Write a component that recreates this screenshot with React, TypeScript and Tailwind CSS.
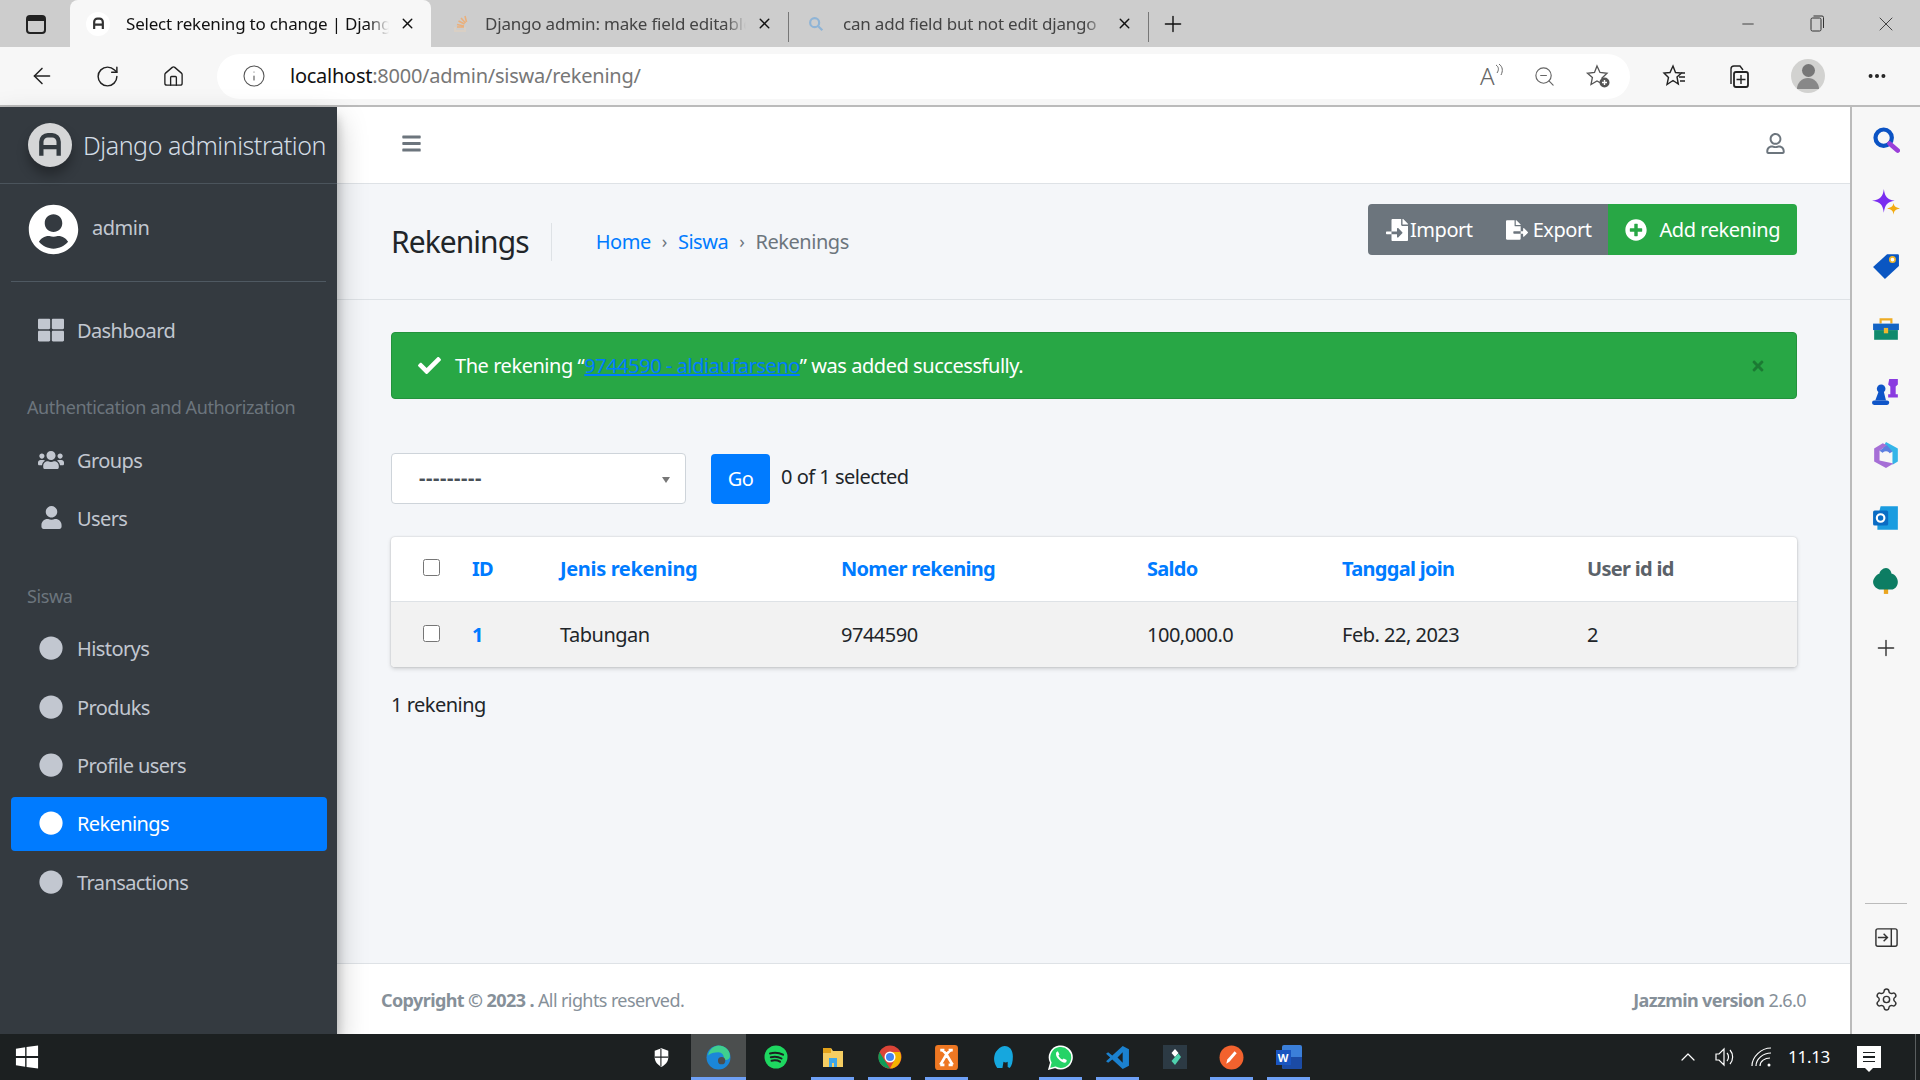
import React from "react";
import {
  FaBars,
  FaCheck,
  FaCircle,
  FaFileExport,
  FaFileImport,
  FaPlusCircle,
  FaRegUser,
  FaThLarge,
  FaTimes,
  FaUser,
  FaUserCircle,
  FaUsers,
} from "react-icons/fa";
import { ArrowLeft, ChevronUp, Home, Info, Minus, MoreHorizontal, Plus, RotateCw, Settings, X, ZoomOut } from "lucide-react";

const sans = "[font-family:'Noto_Sans','Open_Sans',sans-serif]";

function DjangoMark({ className = "" }: { className?: string }) {
  return (
    <svg viewBox="0 0 24 24" className={className} fill="none" stroke="currentColor" strokeWidth="4">
      <path d="M4 22V9a6 6 0 0 1 6-6h4a6 6 0 0 1 6 6v13M4 14h16" />
    </svg>
  );
}

function Tab({
  title,
  icon,
  active,
  width,
}: {
  title: string;
  icon: React.ReactNode;
  active?: boolean;
  width: string;
}) {
  return (
    <div
      className={`flex h-full items-center ${width} ${
        active ? "rounded-t-lg bg-[#f7f7f7] text-[#111]" : "text-[#444]"
      }`}
    >
      <div className={`flex shrink-0 justify-center ${active ? "w-[56px]" : "w-[54px]"}`}>{icon}</div>
      <div className="min-w-0 flex-1 overflow-hidden whitespace-nowrap text-[17px] tracking-[-0.2px] [mask-image:linear-gradient(to_right,black_92%,transparent)]">
        {title}
      </div>
      <X size={17} className="ml-[10px] mr-[15px] shrink-0 text-[#111]" strokeWidth={2} />
    </div>
  );
}

function BrowserChrome() {
  return (
    <div className="shrink-0">
      <div className="flex h-[47px] items-end bg-[#cdcdcd] pl-[70px]">
        <div className="absolute left-[26px] top-[15px] h-[19px] w-[20px] rounded-[4px] border-2 border-[#222] bg-[#cdcdcd]">
          <div className="h-[4px] bg-[#222]" />
        </div>
        <Tab
          active
          width="w-[361px]"
          title="Select rekening to change | Django"
          icon={
            <div className="flex h-[24px] w-[24px] items-center justify-center rounded-full bg-white text-[#333]">
              <DjangoMark className="h-[13px] w-[13px]" />
            </div>
          }
        />
        <Tab
          width="w-[357px]"
          title="Django admin: make field editable"
          icon={
            <svg viewBox="0 0 20 20" className="h-[20px] w-[20px] translate-x-[3px]" fill="none">
              <path d="M4 13v4h10v-4" stroke="#d9cfc4" strokeWidth="2" />
              <path d="M6 13h7M6 10.500l7 1.500M7.500 7l6 3M10 4l4.500 5M14 2l1.500 6" stroke="#eab07c" strokeWidth="1.600" />
            </svg>
          }
        />
        <div className="mb-[5px] h-[30px] w-px self-end bg-[#777]" />
        <Tab
          width="w-[359px]"
          title="can add field but not edit django"
          icon={
            <svg viewBox="0 0 20 20" className="h-[18px] w-[18px]" fill="none" stroke="#8fb4d6" strokeWidth="2.400">
              <circle cx="8.500" cy="8.500" r="5" />
              <path d="M12.500 12.500L17 17" />
            </svg>
          }
        />
        <div className="mb-[5px] h-[30px] w-px self-end bg-[#777]" />
        <div className="flex h-full w-[48px] items-center justify-center">
          <Plus size={26} strokeWidth={1.300} className="text-[#111]" />
        </div>
        <div className="ml-auto flex h-full items-center text-[#333]">
          <div className="flex w-[69px] justify-center"><Minus size={18} strokeWidth={1.200} /></div>
          <div className="flex w-[69px] justify-center">
            <svg viewBox="0 0 14 17" className="h-[17px] w-[14px]" fill="none" stroke="currentColor" strokeWidth="1">
              <rect x="1" y="3" width="10" height="13" rx="1.500" />
              <path d="M3.500 1H12a1.500 1.500 0 0 1 1.500 1.500V13" />
            </svg>
          </div>
          <div className="flex w-[69px] justify-center"><X size={24} strokeWidth={0.900} /></div>
        </div>
      </div>
      <div className="flex h-[60px] items-center border-b-2 border-b-[#bbb] bg-[#f7f7f7] text-[#222]">
        <div className="flex w-[217px] shrink-0 items-center pl-[29px]">
          <ArrowLeft size={26} strokeWidth={1.400} />
          <RotateCw size={25} strokeWidth={1.400} className="ml-[40px]" />
          <Home size={23} strokeWidth={1.400} className="ml-[42px]" />
        </div>
        <div className="flex h-[45px] w-[1413px] items-center rounded-full bg-white pl-[25px] pr-[19px]">
          <Info size={24} strokeWidth={1.100} className="text-[#555]" />
          <div className="ml-[24px] text-[20px] tracking-[-0.25px] text-[#777]">
            <span className="text-[#111]">localhost</span>:8000/admin/siswa/rekening/
          </div>
          <div className="ml-auto flex items-center text-[#666]">
            <div className="flex w-[30px] items-start">
              <span className="text-[24px] font-light leading-none">A</span>
              <svg viewBox="0 0 10 14" className="h-[14px] w-[10px]" fill="none" stroke="currentColor" strokeWidth="1">
                <path d="M1 1c3 2 3 5 1 8M4 0c4 3 4 7 2 11" />
              </svg>
            </div>
            <ZoomOut size={23} strokeWidth={1.200} className="ml-[23px]" />
            <svg viewBox="0 0 26 26" className="ml-[29px] h-[26px] w-[26px]" fill="none" stroke="#555" strokeWidth="1.300">
              <path d="M12 3l3 6.500 7 .8-5 4.600 1.400 6.600L12 18l-6 3.500 1.400-7L2.500 10.300l7-.8z" />
              <circle cx="19.500" cy="19.500" r="5" fill="#555" stroke="none" />
              <path d="M19.500 17v5M17 19.500h5" stroke="#fff" strokeWidth="1.400" />
            </svg>
          </div>
        </div>
        <div className="ml-[32px] flex items-center text-[#222]">
          <svg viewBox="0 0 26 26" className="h-[26px] w-[26px]" fill="none" stroke="currentColor" strokeWidth="1.400">
            <path d="M11 3l2.500 6.500 6 .5-4.500 4 1.300 7L11 17.500 5 21.500l1.500-7L2 10l6-.5zM17 14h6M18 18h5M19 10h4" />
          </svg>
          <svg viewBox="0 0 26 26" className="ml-[37px] h-[26px] w-[26px]" fill="none" stroke="currentColor" strokeWidth="1.400">
            <path d="M6 21V6a3 3 0 0 1 3-3h6l3 4" />
            <rect x="9" y="9" width="14" height="15" rx="2" strokeWidth="1.800" />
            <path d="M16 12v9M11.500 16.500h9" />
          </svg>
          <div className="ml-[40px] flex h-[34px] w-[34px] flex-col items-center justify-center overflow-hidden rounded-full bg-[#d2d2d0]">
            <div className="h-[13px] w-[13px] rounded-full bg-[#777]" />
            <div className="mt-[1px] h-[11px] w-[22px] rounded-t-full bg-[#888]" />
          </div>
          <MoreHorizontal size={22} strokeWidth={2.400} className="ml-[41px]" />
        </div>
      </div>
    </div>
  );
}

function NavItem({ label, icon, active }: { label: string; icon: React.ReactNode; active?: boolean }) {
  return (
    <div
      className={`flex h-[54px] items-center rounded-[4px] pl-[27px] text-[20px] tracking-[-0.6px] ${
        active ? "bg-[#007bff] text-white" : "text-[#c2c7d0]"
      }`}
    >
      <div className="-mt-[2px] flex w-[26px] justify-center">{icon}</div>
      <span className="ml-[13px]">{label}</span>
    </div>
  );
}

function NavHeader({ label, height }: { label: string; height: string }) {
  return (
    <div className={`flex items-end pb-[8px] pl-[16px] text-[18px] tracking-[-0.4px] text-[#6c757d] ${height}`}>{label}</div>
  );
}

function Sidebar() {
  const dot = <FaCircle size={24} />;
  return (
    <aside className="relative z-10 flex w-[337px] shrink-0 flex-col bg-[#343a40] shadow-[0_14px_28px_rgba(0,0,0,0.25),0_10px_10px_rgba(0,0,0,0.22)]">
      <div className="flex h-[77px] shrink-0 items-center border-b border-[#4b545c] pl-[28px]">
        <div className="flex h-[44px] w-[44px] items-center justify-center rounded-full bg-[#d5d6d7] text-[#333a40] shadow-[0_8px_12px_rgba(0,0,0,0.3)]">
          <DjangoMark className="h-[26px] w-[26px]" />
        </div>
        <span className="ml-[11px] mt-[2px] text-[25px] font-light tracking-[-0.45px] text-[#d3dde6]">Django administration</span>
      </div>
      <div className="mx-[11px] flex h-[98px] shrink-0 items-center border-b border-[#4f5962] pb-[6px] pl-[17px]">
        <FaUserCircle size={51} className="text-white" />
        <span className="-mt-[4px] ml-[13px] text-[20px] tracking-[-0.5px] text-[#c2c7d0]">admin</span>
      </div>
      <div className="flex flex-col gap-[4.3px] pl-[11px] pr-[10px] pt-[22px]">
        <NavItem label="Dashboard" icon={<FaThLarge size={26} />} />
        <NavHeader label="Authentication and Authorization" height="h-[67px]" />
        <NavItem label="Groups" icon={<FaUsers size={30} />} />
        <NavItem label="Users" icon={<FaUser size={23} />} />
        <NavHeader label="Siswa" height="h-[68px]" />
        <NavItem label="Historys" icon={dot} />
        <NavItem label="Produks" icon={dot} />
        <NavItem label="Profile users" icon={dot} />
        <NavItem label="Rekenings" icon={dot} active />
        <NavItem label="Transactions" icon={dot} />
      </div>
    </aside>
  );
}

function ContentHeader() {
  return (
    <div className="flex h-[116px] shrink-0 items-center border-b border-[#dee2e6] pl-[54px] pr-[53px] tracking-[-0.45px]">
      <h1 className="text-[30px] tracking-[-0.95px] text-[#212529]">Rekenings</h1>
      <div className="ml-[22px] h-[38px] w-px bg-[#dee2e6]" />
      <nav className="ml-[44px] flex items-center text-[20px] text-[#6c757d]">
        <span className="text-[#007bff]">Home</span>
        <span className="mx-[11px] text-[18px]">›</span>
        <span className="text-[#007bff]">Siswa</span>
        <span className="mx-[11px] text-[18px]">›</span>
        <span>Rekenings</span>
      </nav>
      <div className="-mt-[24px] ml-auto flex h-[51px] overflow-hidden rounded-[4px] text-[20px] text-white">
        <div className="flex items-center bg-[#6c757d] pl-[18px] pr-[16px]">
          <FaFileImport size={22} />
          <span className="ml-[2px]">Import</span>
          <FaFileExport size={22} className="ml-[33px]" />
          <span className="ml-[5px]">Export</span>
        </div>
        <div className="flex items-center bg-[#28a745] px-[17px]">
          <FaPlusCircle size={22} />
          <span className="ml-[13px]">Add rekening</span>
        </div>
      </div>
    </div>
  );
}

const cols = "grid grid-cols-[81px_88px_281px_306px_195px_245px_1fr] items-center";

function Results() {
  return (
    <div className="mt-[33px] rounded-[4px] bg-white text-[20px] tracking-[-0.5px] text-[#212529] shadow-[0_0_2px_rgba(0,0,0,0.2),0_2px_4px_rgba(0,0,0,0.15)]">
      <div className={`${cols} h-[65px] border-b border-[#dee2e6] font-bold tracking-[-0.7px]`}>
        <div className="-mt-[3px] flex justify-center"><input type="checkbox" className="h-[17px] w-[17px]" readOnly /></div>
        <span className="text-[#007bff]">ID</span>
        <span className="tracking-[-0.35px] text-[#007bff]">Jenis rekening</span>
        <span className="text-[#007bff]">Nomer rekening</span>
        <span className="text-[#007bff]">Saldo</span>
        <span className="text-[#007bff]">Tanggal join</span>
        <span className="text-[#5b6269]">User id id</span>
      </div>
      <div className={`${cols} h-[65px] rounded-b-[4px] bg-[#f2f2f2]`}>
        <div className="-mt-[3px] flex justify-center"><input type="checkbox" className="h-[17px] w-[17px]" readOnly /></div>
        <span className="font-bold text-[#007bff]">1</span>
        <span>Tabungan</span>
        <span>9744590</span>
        <span>100,000.0</span>
        <span>Feb. 22, 2023</span>
        <span>2</span>
      </div>
    </div>
  );
}

function Main() {
  return (
    <main className="flex min-w-0 flex-1 flex-col bg-[#f4f6f9]">
      <div className="flex h-[77px] shrink-0 items-center justify-between border-b border-[#dee2e6] bg-white px-[64px] pb-[4px]">
        <FaBars size={21} className="text-[#6c757d]" />
        <FaRegUser size={21} className="text-[#6c757d]" />
      </div>
      <ContentHeader />
      <div className="flex-1 pl-[54px] pr-[53px] pt-[32px]">
        <div className="flex h-[67px] items-center rounded-[4px] border border-[#23923d] bg-[#28a745] pl-[26px] pr-[30px] text-[20px] tracking-[-0.45px] text-white">
          <FaCheck size={23} />
          <span className="ml-[14px]">
            The rekening “<span className="text-[#007bff] underline">9744590 - aldiaufarseno</span>” was added successfully.
          </span>
          <FaTimes size={16} className="ml-auto text-[#1b7a33]" />
        </div>
        <div className="mt-[54px] flex h-[51px] items-center text-[20px] tracking-[-0.5px] text-[#212529]">
          <div className="relative flex h-[51px] w-[295px] items-center rounded-[4px] border border-[#ced4da] bg-white pb-[2px] pl-[27px] text-[20px] font-bold tracking-[0.6px] text-[#495057]">
            ---------
            <div className="absolute right-[15px] top-[23px] h-0 w-0 border-x-[4px] border-t-[6px] border-x-transparent border-t-[#777]" />
          </div>
          <div className="ml-[25px] flex h-[50px] w-[59px] items-center justify-center rounded-[4px] bg-[#007bff] text-white">Go</div>
          <span className="-mt-[4px] ml-[11px]">0 of 1 selected</span>
        </div>
        <Results />
        <div className="mt-[23px] text-[20px] tracking-[-0.5px] text-[#212529]">1 rekening</div>
      </div>
      <div className="flex h-[71px] shrink-0 items-center justify-between border-t border-[#dee2e6] bg-white px-[44px] pt-[2px] text-[18px] tracking-[-0.6px] text-[#869099]">
        <div><span className="font-bold">Copyright © 2023 .</span> All rights reserved.</div>
        <div><span className="font-bold">Jazzmin version</span> 2.6.0</div>
      </div>
    </main>
  );
}

function EdgeRail() {
  return (
    <aside className="flex w-[70px] shrink-0 flex-col items-center border-l-2 border-l-[#bbb] bg-[#f7f7f7]">
      <div className="flex flex-col items-center gap-[35px] pt-[19px]">
        <svg viewBox="0 0 24 24" className="h-[28px] w-[28px]" fill="none">
          <circle cx="10" cy="10" r="7" stroke="#0b53c4" strokeWidth="3.600" />
          <path d="M15 15l7 6" stroke="#9a3fd8" strokeWidth="4" strokeLinecap="round" />
        </svg>
        <svg viewBox="0 0 26 26" className="h-[28px] w-[28px]">
          <path d="M11 0c1 7 3 10 10 11-7 1-9 4-10 11-1-7-3-10-11-11 8-1 10-4 11-11z" fill="#7a2cf0" />
          <path d="M20 13c.5 3 1.500 4 6 5-4.500 1-5.500 2-6 6-.5-4-1.500-5-6-6 4.500-1 5.500-2 6-5z" fill="#f3ab12" />
        </svg>
        <svg viewBox="0 0 26 26" className="h-[28px] w-[28px]">
          <path d="M1 14L14 2h10a1 1 0 0 1 1 1v10L12 25z" fill="#0a56c2" />
          <circle cx="19" cy="7" r="2.500" fill="#fff" stroke="#f0b429" strokeWidth="1.500" />
        </svg>
        <svg viewBox="0 0 26 26" className="h-[28px] w-[28px]">
          <path d="M8 8V4h10v4" fill="none" stroke="#eeac24" strokeWidth="2" />
          <rect x="1" y="8" width="24" height="6" fill="#1364c4" />
          <rect x="2" y="14" width="22" height="9" fill="#0f8a6d" />
          <rect x="11" y="12" width="4" height="5" fill="#f1b82d" />
        </svg>
        <svg viewBox="0 0 26 26" className="h-[28px] w-[28px]">
          <path d="M16 1h8v5l-2 2v7h2v3h-9v-3h2V8l-2-2z" fill="#8a3be0" />
          <circle cx="8.500" cy="10" r="4" fill="#0f55c8" />
          <path d="M6 13h5l2 8H3z" fill="#0f55c8" />
          <rect x="0" y="21" width="16" height="4" rx="2" fill="#0f55c8" />
        </svg>
        <svg viewBox="0 0 26 26" className="h-[28px] w-[28px]">
          <path d="M13 1l11 6v12l-5 3V10l-9-4z" fill="#34b5e8" />
          <path d="M2 7l8-5 4 2-7 5v9l13 3-7 4-11-6z" fill="#a66fd6" />
          <path d="M7 9l7-5 5 6-6 3z" fill="#5c7fe0" />
          <circle cx="13" cy="13" r="3.500" fill="#f7f7f7" />
        </svg>
        <svg viewBox="0 0 26 26" className="h-[28px] w-[28px]">
          <path d="M8 2h16v22H5V14z" fill="#1a9ce0" />
          <rect x="1" y="6" width="14" height="14" rx="1.500" fill="#0a6cc4" />
          <circle cx="8" cy="13" r="3.500" fill="none" stroke="#fff" strokeWidth="2" />
        </svg>
        <svg viewBox="0 0 26 26" className="h-[28px] w-[28px]">
          <rect x="11" y="20" width="4" height="5" fill="#eaa51f" />
          <path d="M13 1c3 0 5 3 5 5 4 1 6 5 6 8 0 4-3 7-6 7H8c-3 0-7-3-7-7 0-3 3-7 6-8 0-2 3-5 6-5z" fill="#0d7d63" />
        </svg>
        <Plus size={26} strokeWidth={1.300} className="mt-[5px] text-[#333]" />
      </div>
      <div className="mt-auto flex w-full flex-col items-center pb-[22px] text-[#333]">
        <div className="mb-[21px] h-px w-[42px] bg-[#bbb]" />
        <svg viewBox="0 0 26 26" className="h-[25px] w-[25px]" fill="none" stroke="currentColor" strokeWidth="1.500">
          <rect x="2" y="4" width="22" height="18" rx="2" />
          <path d="M18 4v18M4 13h10M10 9l4 4-4 4" />
        </svg>
        <Settings size={25} strokeWidth={1.400} className="mt-[37px]" />
      </div>
    </aside>
  );
}

function TaskIcon({ children, running, hot }: { children: React.ReactNode; running?: boolean; hot?: boolean }) {
  return (
    <div className={`relative flex h-full items-center justify-center ${hot ? "mx-[1px] w-[55px] bg-[#4b4e4e]" : "w-[57px]"}`}>
      {children}
      {running && (
        <div className={`absolute bottom-0 h-[3px] bg-[#6ea0f5] ${hot ? "w-full" : "w-[43px]"}`} />
      )}
    </div>
  );
}

function Taskbar() {
  return (
    <div className="relative z-20 flex h-[46px] shrink-0 items-center bg-[#1c2021] text-white">
      <svg viewBox="0 0 26 26" className="ml-[15px] h-[24px] w-[24px]" fill="#fff">
        <path d="M1 4l10-1.500V12H1zM12.500 2.300L25 .5V12H12.500zM1 14h10v9.500L1 22zM12.500 14H25v11.500l-12.500-1.800z" />
      </svg>
      <div className="ml-[594px] flex h-full items-center">
        <TaskIcon>
          <svg viewBox="0 0 20 24" className="h-[21px] w-[17px]" fill="#fff"><path d="M10 1l8 3v8c0 5-4 9-8 11-4-2-8-6-8-11V4z" /><path d="M9.300 2v20M2 11.500h16" stroke="#1c2021" strokeWidth="1.300" /></svg>
        </TaskIcon>
        <TaskIcon hot running>
          <svg viewBox="0 0 24 24" className="h-[25px] w-[25px]">
            <circle cx="12" cy="12" r="11.500" fill="#1b87d8" />
            <path d="M2 10C3 4 8 .5 12 .5c6 0 11 4.500 11 10 0 3-3 4.500-6 3.500 1-4-2-7-5-7-4 0-8 1-10 3z" fill="#3fcf8e" />
            <circle cx="15" cy="15" r="3.500" fill="#4b4e4e" />
          </svg>
        </TaskIcon>
        <TaskIcon>
          <svg viewBox="0 0 24 24" className="h-[24px] w-[24px]">
            <circle cx="12" cy="12" r="11.500" fill="#1ed760" />
            <path d="M6 8.500c4-1 9-.8 13 1.200M6.800 12.300c3.500-.8 7.500-.6 10.700 1.200M7.500 15.700c3-.6 6-.5 8.500 1" stroke="#1c2021" strokeWidth="2" fill="none" strokeLinecap="round" />
          </svg>
        </TaskIcon>
        <TaskIcon running>
          <svg viewBox="0 0 24 24" className="h-[24px] w-[24px]">
            <path d="M2 3h8l2 3h10v16H2z" fill="#f5cd62" />
            <path d="M2 3h8v5H2z" fill="#e3a21a" />
            <path d="M8 22v-9h8v9h-3v-4h-2v4z" fill="#3ea6e8" />
          </svg>
        </TaskIcon>
        <TaskIcon running>
          <svg viewBox="0 0 24 24" className="h-[24px] w-[24px]">
            <circle cx="12" cy="12" r="11.500" fill="#db4437" />
            <path d="M12 23.500A11.500 11.500 0 0 1 1.500 7L7 16z" fill="#0f9d58" />
            <path d="M12 23.500A11.500 11.500 0 0 0 22 7H12l4 9z" fill="#f4b400" />
            <circle cx="12" cy="12" r="5.500" fill="#fff" />
            <circle cx="12" cy="12" r="4" fill="#4285f4" />
          </svg>
        </TaskIcon>
        <TaskIcon running>
          <svg viewBox="0 0 24 24" className="h-[25px] w-[25px]">
            <rect x="1" y="0" width="22" height="24" rx="3" fill="#ee7722" />
            <path d="M7 5c4 0 8 10 11 14M17 5C13 5 9 15 6 19M6 5h4M14 5h4M6 19h4M14 19h4" stroke="#fff" strokeWidth="2.600" fill="none" />
          </svg>
        </TaskIcon>
        <TaskIcon>
          <svg viewBox="0 0 24 24" className="h-[25px] w-[25px]">
            <path d="M6 22c-3-4-4-9-2-14 2-4 6-7 9-7 5 0 8 4 8 10 0 5-1 9-3 11l-2-1v-5c-1 1-3 1-4 0l-1 6z" fill="#16a7de" />
          </svg>
        </TaskIcon>
        <TaskIcon running>
          <svg viewBox="0 0 24 24" className="h-[25px] w-[25px]">
            <path d="M1 23l1.700-6A10.800 10.800 0 1 1 7 21.400z" fill="#25d366" stroke="#fff" strokeWidth="1.500" />
            <path d="M8 7c-1 2 0 5 3 7.500s5 3 6.500 2l.5-2-3-1.500-1 1c-2-.8-3-2-4-4l1-1-1.500-3z" fill="#fff" />
          </svg>
        </TaskIcon>
        <TaskIcon running>
          <svg viewBox="0 0 24 24" className="h-[25px] w-[25px]">
            <path d="M17 1l6 3v16l-6 3L7 14l-4 3-2-1.500L5 12 1 8.500 3 7l4 3z" fill="#1b81cf" />
            <path d="M17 7l-5 5 5 5z" fill="#1c2021" />
          </svg>
        </TaskIcon>
        <TaskIcon>
          <div className="flex h-[24px] w-[24px] items-center justify-center bg-[#2c3a44]">
            <svg viewBox="0 0 12 16" className="h-[16px] w-[12px]"><path d="M6 0l3.500 4L6 8 2.500 4z" fill="#fff" /><path d="M6 8l3.500-3.500L12 8 6 16 2.500 12z" fill="#4fd2ae" /></svg>
          </div>
        </TaskIcon>
        <TaskIcon running>
          <svg viewBox="0 0 24 24" className="h-[25px] w-[25px]">
            <circle cx="12" cy="12" r="11.500" fill="#f2622e" />
            <path d="M7 18l1-4 7-8 2 2-7 8z" fill="#fff" />
          </svg>
        </TaskIcon>
        <TaskIcon running>
          <div className="relative h-[24px] w-[26px]">
            <div className="absolute right-0 top-0 h-full w-[20px] rounded-[2px] bg-[#3b7fd9]" />
            <div className="absolute right-0 top-[12px] h-[12px] w-[20px] rounded-b-[2px] bg-[#1b4ba5]" />
            <div className="absolute left-0 top-[5px] flex h-[15px] w-[15px] items-center justify-center bg-[#1a55c0] text-[11px] font-bold leading-none">W</div>
          </div>
        </TaskIcon>
      </div>
      <div className="ml-auto flex h-full items-center">
        <ChevronUp size={24} strokeWidth={1.200} />
        <svg viewBox="0 0 24 24" className="ml-[13px] h-[24px] w-[24px]" fill="none" stroke="currentColor" strokeWidth="1.200">
          <path d="M3 9v6h3l5 5V4L6 9zM14 8c2 2 2 6 0 8M17 5c3.500 4 3.500 10 0 14" />
        </svg>
        <svg viewBox="0 0 24 24" className="ml-[13px] h-[24px] w-[24px]" fill="none" stroke="currentColor" strokeWidth="1.200">
          <path d="M2 21C2 12 11 3 21 3M6 21C6 14 13 8 21 8M10 21c0-5 5-8 10-8" />
          <circle cx="19" cy="20" r="1.500" fill="currentColor" stroke="none" />
        </svg>
        <span className="ml-[14px] text-[17px] tracking-[-0.3px]">11.13</span>
        <div className="relative ml-[27px] mr-[34px] flex h-[22px] w-[24px] flex-col justify-center gap-[3px] bg-white px-[6px]">
          <div className="h-[1.5px] bg-[#1c2021]" />
          <div className="h-[1.5px] bg-[#1c2021]" />
          <div className="h-[1.5px] bg-[#1c2021]" />
          <div className="absolute -bottom-[4px] left-[8px] h-0 w-0 border-x-[4px] border-t-[4px] border-x-transparent border-t-white" />
        </div>
        <div className="h-full w-[5px] border-l border-[#5a5e5f]" />
      </div>
    </div>
  );
}

export default function App() {
  return (
    <div className={`relative flex h-[1080px] w-[1920px] flex-col overflow-hidden ${sans}`}>
      <BrowserChrome />
      <div className="flex min-h-0 flex-1">
        <Sidebar />
        <Main />
        <EdgeRail />
      </div>
      <Taskbar />
    </div>
  );
}
